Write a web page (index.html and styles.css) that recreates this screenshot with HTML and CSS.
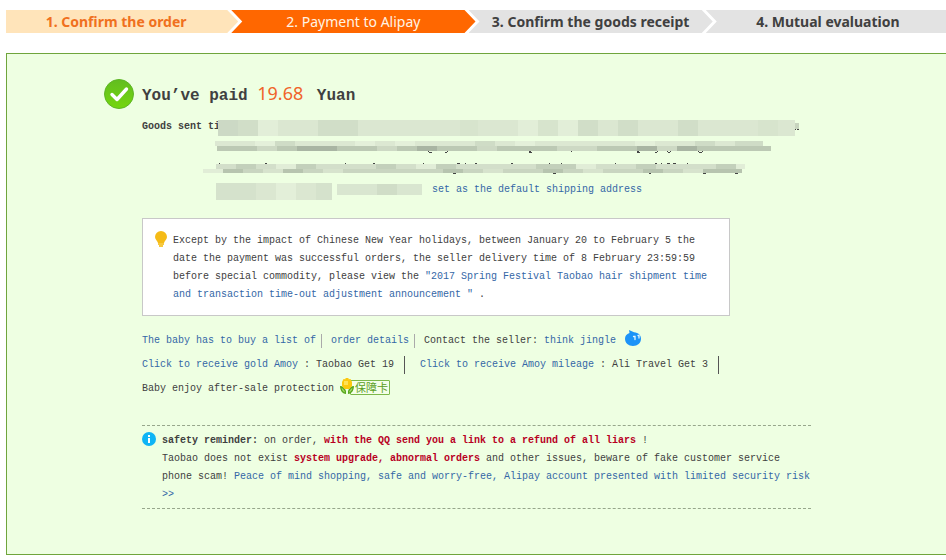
FILE: index.html
```html
<!DOCTYPE html>
<html lang="en">

  <head>
    <meta charset="utf-8">
    <title>Payment to Alipay</title>
    <link rel="stylesheet" href="styles.css">
  </head>

  <body>

    <div class="steps-wrap">
      <ol class="steps">
        <li class="done">1. Confirm the order</li>
        <li class="current">2. Payment to Alipay</li>
        <li>3. Confirm the goods receipt</li>
        <li>4. Mutual evaluation</li>
      </ol>
    </div>

    <div class="result">

      <div class="paid">
        <svg class="ok" width="30" height="30" viewBox="0 0 30 30">
          <defs>
            <linearGradient id="green" x1="0" y1="0" x2="0" y2="1">
              <stop offset="0" stop-color="#62bd20"/>
              <stop offset="1" stop-color="#74d60d"/>
            </linearGradient>
          </defs>
          <circle cx="15" cy="15" r="14.5" fill="url(#green)" stroke="#5eb526"/>
          <path d="M8 15.5l5 5L22.5 10" fill="none" stroke="#fff" stroke-width="3.4" stroke-linecap="round" stroke-linejoin="round"/>
        </svg>
        <h1>You’ve paid <em>19.68</em> Yuan</h1>
      </div>

      <div class="address">
        <strong>Goods sent ti</strong>
        <!-- masked address -->
        <svg class="mask" width="600" height="82" viewBox="203 119 600 82" shape-rendering="crispEdges">
          <path fill="#c7d4be" d="M795 123h4v6h-4z"/>
          <path fill="#444" d="M795 129h1v1h-1zM797 129h2v1h-2z"/>
          <path fill="#dbe7d1" d="M218 120h577v16H218z"/>
          <path fill="#ccd9c5" d="M218 120h20v16h-20z"/>
          <path fill="#d1dec8" d="M238 120h20v16h-20zM318 120h40v16h-40zM578 120h20v16h-20zM618 120h20v16h-20zM678 120h20v16h-20z"/>
          <path fill="#d7e4cd" d="M460 120h18v16h-18zM538 120h20v16h-20zM758 120h20v16h-20z"/>
          <path fill="#e2eed8" d="M258 120h20v16h-20zM518 120h20v16h-20zM558 120h20v16h-20z"/>

          <path fill="#dce8d2" d="M215 141h548v5H215z"/>
          <path fill="#e4f0da" d="M255 141h20v5h-20zM355 141h20v5h-20zM395 141h20v5h-20zM515 141h20v5h-20zM635 141h20v5h-20z"/>
          <path fill="#cfdcc6" d="M275 141h20v5h-20zM475 141h20v5h-20zM695 141h20v5h-20zM735 141h28v5h-28z"/>
          <path fill="#bcc9b4" d="M217 146h554v5H217z"/>
          <path fill="#cdd9c4" d="M257 146h20v5h-20zM377 146h20v5h-20zM477 146h20v5h-20zM557 146h40v5h-40zM657 146h20v5h-20z"/>
          <path fill="#a9b5a3" d="M297 146h40v5h-40zM417 146h20v5h-20zM637 146h20v5h-20zM677 146h20v5h-20z"/>
          <path fill="#444" d="M428 151h1v1h-1zM429 152h3v1h-3zM445 152h2v1h-2zM447 151h1v1h-1zM529 151h2v1h-2zM529 152h3v1h-3zM571 151h1v1h-1zM637 151h2v1h-2zM637 152h3v1h-3zM655 152h2v1h-2zM657 151h1v1h-1zM667 151h1v1h-1zM668 152h2v1h-2zM670 151h1v1h-1zM698 151h1v1h-1zM699 152h3v1h-3zM702 151h1v1h-1z"/>

          <path fill="#444" d="M219 163h1v1h-1zM265 163h2v1h-2zM345 163h1v1h-1zM373 163h2v1h-2zM423 163h1v1h-1zM457 163h3v1h-3zM465 163h1v1h-1zM475 163h2v1h-2zM511 163h2v1h-2zM549 163h1v1h-1zM561 163h1v1h-1zM615 163h1v1h-1zM655 163h2v1h-2zM661 163h1v1h-1zM667 163h3v1h-3zM673 163h3v1h-3zM687 163h1v1h-1z"/>
          <path fill="#d3dfca" d="M216 164h529v5H216z"/>
          <path fill="#c3d0bb" d="M236 164h20v5h-20zM296 164h20v5h-20zM376 164h20v5h-20zM436 164h20v5h-20zM536 164h40v5h-40zM636 164h20v5h-20zM716 164h20v5h-20z"/>
          <path fill="#e1edd7" d="M276 164h20v5h-20zM416 164h20v5h-20zM576 164h20v5h-20zM736 164h9v5h-9z"/>
          <path fill="#e1edd7" d="M203 169h20v4h-20z"/>
          <path fill="#c9d5c0" d="M223 169h519v4H223z"/>
          <path fill="#b7c4af" d="M223 169h20v4h-20zM283 169h20v4h-20zM443 169h20v4h-20zM543 169h20v4h-20zM643 169h20v4h-20zM703 169h39v4h-39z"/>
          <path fill="#d7e3cd" d="M263 169h20v4h-20zM323 169h20v4h-20zM483 169h20v4h-20zM583 169h20v4h-20zM683 169h20v4h-20z"/>
          <path fill="#444" d="M453 173h3v1h-3zM553 173h3v1h-3zM649 173h2v1h-2zM703 173h3v1h-3zM735 173h3v1h-3z"/>

          <path fill="#d5e2cc" d="M216 183h116v17H216z"/>
          <path fill="#dbe7d1" d="M256 183h20v17h-20zM296 183h20v17h-20z"/>
          <path fill="#e3efd9" d="M276 183h20v17h-20z"/>
          <path fill="#d9e6d0" d="M337 184h85v11h-85z"/>
          <path fill="#d0ddc7" d="M377 184h20v11h-20z"/>
        </svg>
        <a class="set-default" href="#">set as the default shipping address</a>
      </div>

      <div class="notice">
        <svg class="bulb" width="12" height="16" viewBox="0 0 12 16">
          <path fill="#f5bb17" d="M6 0a6 6 0 0 0-6 6c0 2.600 2.800 4.200 3 6h6c.2-1.800 3-3.400 3-6a6 6 0 0 0-6-6z"/>
          <path fill="#f7c93f" d="M3 12h6v2H3zM4 14h4v2H4z"/>
        </svg>
        Except by the impact of Chinese New Year holidays, between January 20 to February 5 the date the payment was successful orders, the seller delivery time of 8 February 23:59:59 before special commodity, please view the <a href="#">"2017 Spring Festival Taobao hair shipment time and transaction time-out adjustment announcement "</a> .
      </div>

      <div class="links">
        <p class="row">
          <a class="sep" href="#">The baby has to buy a list of</a>
          <a class="sep" href="#">order details</a>
          <span>Contact the seller: <a href="#">think jingle</a></span>
          <svg class="wangwang" width="16" height="16" viewBox="0 0 16 16">
            <path fill="#1c93f8" d="M4 0l5 2.200c4.500.3 7 3 7 6.600 0 4.200-3.500 7.200-8 7.200s-8-3-8-7.200C0 6 1.500 4 4.500 3z"/>
            <path fill="none" stroke="#e4f6ff" stroke-width="1.300" stroke-linecap="round" d="M8.500 6.500h1.500v3M13 5.500h1v2.500"/>
          </svg>
        </p>
        <p class="row">
          <span class="bar"><a href="#">Click to receive gold Amoy</a> : Taobao Get 19</span>
          <span class="bar"><a href="#">Click to receive Amoy mileage</a> : Ali Travel Get 3</span>
        </p>
        <p class="row">
          <span>Baby enjoy after-sale protection</span>
          <a class="card" href="#">
            <svg class="flower" width="14" height="17" viewBox="0 0 14 17">
              <path fill="#58a81e" d="M0 8c3 0 5 2 6 5v3c-3 0-6-3-6-8zM14 8c-3 0-5 2-6 5v3c3 0 6-3 6-8z"/>
              <path fill="#a6da68" d="M1.500 10c2 1 3 2.500 3.500 4.500C3 14 2 12 1.500 10zM12.500 10c-2 1-3 2.500-3.500 4.500 2-.5 3-2.500 3.500-4.500z"/>
              <path fill="#fbc90f" d="M5.500 0h3v1.200l2-.2 1.500 3v4L9.500 11h-5L2 8V4l1.500-3 2 .2z"/>
              <path fill="#ffe255" d="M4 3h4v4H4z"/>
            </svg>
            <span lang="zh">保障卡</span>
          </a>
        </p>
      </div>

      <div class="reminder">
        <svg class="info" width="14" height="14" viewBox="0 0 14 14">
          <circle cx="7" cy="7" r="7" fill="#0fb4f5"/>
          <path fill="#fff" d="M6 3h2v2H6zM6 6h2v5H6z"/>
        </svg>
        <strong>safety reminder:</strong> on order, <strong class="warn">with the QQ send you a link to a refund of all liars</strong> !<br>
        Taobao does not exist <strong class="warn">system upgrade, abnormal orders</strong> and other issues, beware of fake customer service phone scam! <a href="#">Peace of mind shopping, safe and worry-free, Alipay account presented with limited security risk &gt;&gt;</a>
      </div>

    </div>

  </body>

</html>
```

FILE: styles.css
```css
body {
  margin: 10px 0 0 6px;
  background-color: #fff;
  font-family: "Liberation Mono", "Noto Sans CJK SC", monospace;
  font-size: 10px;
  line-height: 18px;
  color: #404040;
}

a {
  color: #3467a6;
  text-decoration: none;
}

a:hover {
  text-decoration: underline;
}

h1, p, ol {
  margin: 0;
  padding: 0;
}

/* steps */
.steps-wrap {
  overflow: hidden;
}

.steps {
  display: flex;
  margin-right: -4px;
  list-style: none;
  font-family: "Noto Sans", "Open Sans", sans-serif;
  font-size: 14px;
  font-weight: bold;
  line-height: 23px;
  text-align: center;
  white-space: nowrap;
}

.steps li {
  flex: 1 1 0;
  padding-right: 12px;
  background-color: #e3e3e3;
  clip-path: polygon(0 0, calc(100% - 11px) 0, 100% 50%, calc(100% - 11px) 100%, 0 100%, 11px 50%);
}

.steps li + li {
  margin-left: -7px;
  padding-left: 12px;
}

.steps .done {
  background-color: #ffe4ba;
  color: #f0701e;
  clip-path: polygon(0 0, calc(100% - 11px) 0, 100% 50%, calc(100% - 11px) 100%, 0 100%);
}

.steps .current {
  background-color: #ff6700;
  color: #fff3e4;
  font-weight: normal;
}

.steps li:last-child {
  clip-path: polygon(0 0, 100% 0, 100% 100%, 0 100%, 11px 50%);
}

/* result panel */
.result {
  margin-top: 20px;
  padding: 25px 16px 45px 135px;
  border: 1px solid #6fa53c;
  border-right: none;
  background-color: #eeffe2;
}

.paid {
  display: flex;
  align-items: center;
  height: 30px;
  margin-left: -38px;
}

.ok {
  margin-right: 8px;
}

h1 {
  font-size: 16px;
  line-height: 30px;
}

h1 em {
  margin-right: 4px;
  font-family: "Noto Sans", "Open Sans", sans-serif;
  font-size: 18px;
  font-style: normal;
  font-weight: normal;
  color: #f0642a;
}

.address {
  position: relative;
  margin-top: 9px;
}

.address strong {
  display: block;
}

.mask {
  position: absolute;
  top: 1px;
  left: 61px;
}

.set-default {
  display: block;
  position: relative;
  width: max-content;
  margin: 45px 0 0 290px;
}

.notice {
  position: relative;
  box-sizing: border-box;
  max-width: 588px;
  margin-top: 19px;
  padding: 13px 16px 11px 30px;
  border: 1px solid #c8c8c8;
  background-color: #fff;
}

.bulb {
  position: absolute;
  top: 12px;
  left: 12px;
}

.links {
  margin-top: 16px;
}

.row {
  display: flex;
  align-items: center;
  height: 18px;
  margin-bottom: 6px;
}

.sep {
  margin-right: 9px;
  padding-right: 5px;
  border-right: 1px solid #aaa;
  line-height: 14px;
}

.wangwang {
  margin: 0 0 6px 9px;
}

.bar {
  margin-right: 15px;
  padding-right: 10px;
  border-right: 1px solid #555;
}

.card {
  display: flex;
  align-items: flex-end;
  margin: 0 0 6px 6px;
}

.flower {
  position: relative;
  margin-right: -4px;
}

.card span {
  box-sizing: border-box;
  height: 15px;
  padding: 0 1px 0 4px;
  border: 1px solid #7cb84a;
  border-radius: 1px;
  background-color: #f4ffe8;
  font-family: "Noto Sans CJK SC", sans-serif;
  font-size: 11px;
  line-height: 13px;
  color: #5a9e22;
}

.reminder {
  position: relative;
  box-sizing: border-box;
  max-width: 669px;
  margin-top: 27px;
  padding: 6px 0 4px 20px;
  border-top: 1px dashed #97a78c;
  border-bottom: 1px dashed #97a78c;
}

.info {
  position: absolute;
  top: 6px;
  left: 0;
}

.warn {
  color: #b8001f;
}
```
